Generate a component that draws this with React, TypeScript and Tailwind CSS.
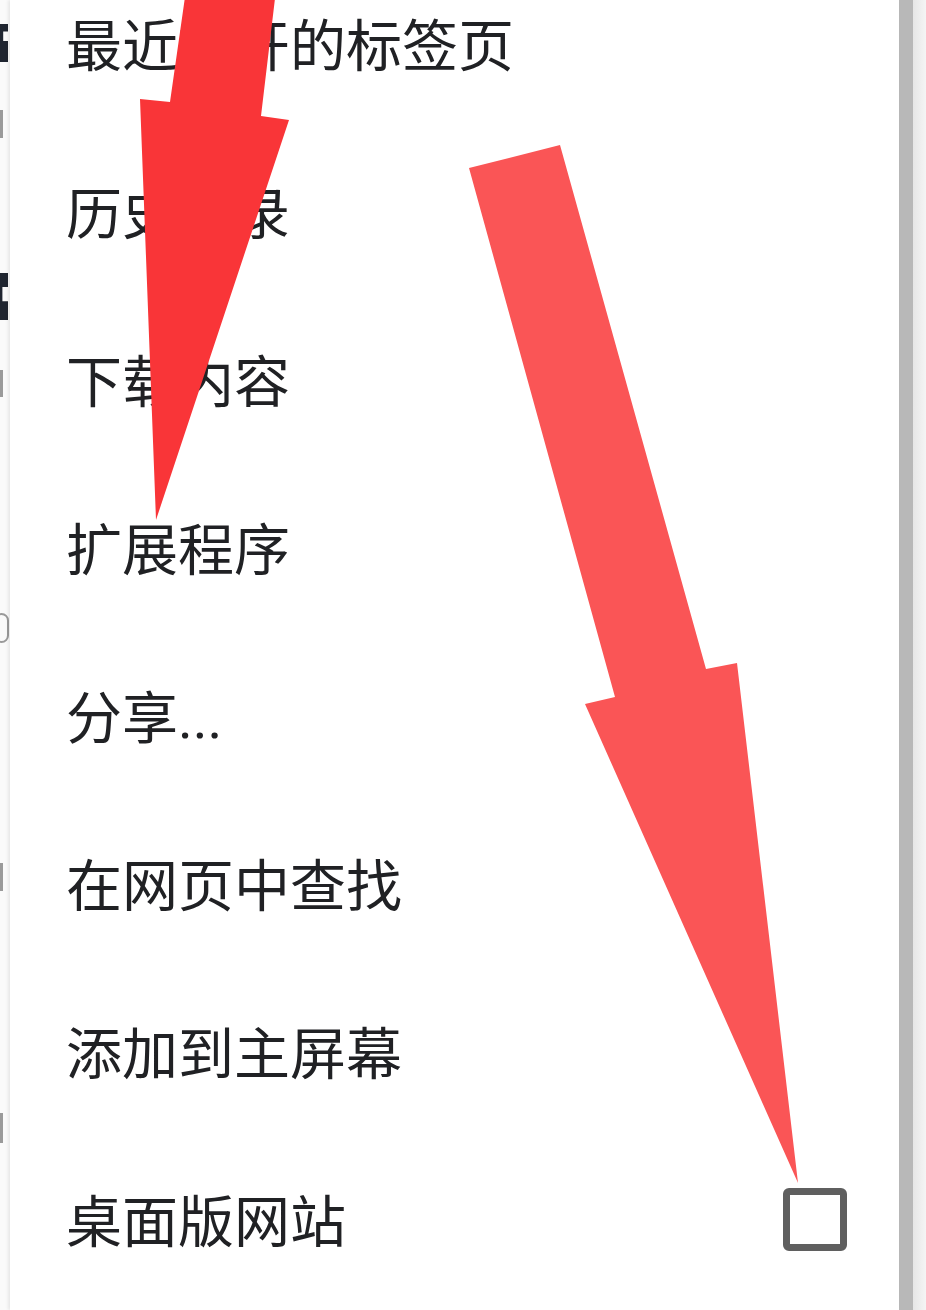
const items = [
  "最近打开的标签页",
  "历史记录",
  "下载内容",
  "扩展程序",
  "分享...",
  "在网页中查找",
  "添加到主屏幕",
];

// the page behind the menu, only a sliver shows on the left
function BackgroundSliver() {
  return (
    <div className="flex w-[10px] shrink-0 flex-col overflow-hidden bg-[#fafafa]">
      <div className="mt-[24px] h-[38px] w-[8px] bg-[#1f2530] [clip-path:polygon(0_0,100%_0,100%_20%,40%_20%,40%_45%,100%_45%,100%_100%,0_100%)]" />
      <div className="mt-[48px] h-[28px] w-[3px] bg-[#9a9a9a]" />
      <div className="mt-[135px] h-[47px] w-[8px] bg-[#1f2530] [clip-path:polygon(0_0,100%_0,100%_30%,30%_30%,30%_60%,100%_60%,100%_100%,0_100%)]" />
      <div className="mt-[50px] h-[27px] w-[3px] bg-[#9a9a9a]" />
      <div className="ml-[-6px] mt-[216px] h-[30px] w-[15px] rounded-full border-[2px] border-[#9a9a9a]" />
      <div className="mt-[220px] h-[28px] w-[3px] bg-[#9a9a9a]" />
      <div className="mt-[222px] h-[30px] w-[3px] bg-[#9a9a9a]" />
    </div>
  );
}

function Arrows() {
  return (
    <svg
      className="pointer-events-none absolute inset-0 h-full w-full"
      viewBox="0 0 926 1310"
    >
      <polygon
        points="186,-10 276,-10 261,116 289,120 156,520 140,99 170,102"
        fill="#f93538"
      />
      <polygon
        points="469,168 560,145 706,669 737,663 798,1183 585,704 615,697"
        fill="#fa5556"
      />
    </svg>
  );
}

export default function App() {
  return (
    <div
      className="relative flex h-[1310px] w-[926px] overflow-hidden bg-white"
      style={{ fontFamily: '"Roboto", "Noto Sans CJK SC", sans-serif' }}
    >
      <BackgroundSliver />

      {/* Menu panel */}
      <div className="relative flex-1 bg-white shadow-[-2px_0_3px_rgba(0,0,0,0.08)]">
        <div className="-mt-[37px] flex flex-col pl-[56px] pr-[52px]">
          {items.map((label) => (
            <div
              key={label}
              className="flex h-[168px] items-center text-[56px] leading-none text-[#202124]"
            >
              {label}
            </div>
          ))}
          <div className="flex h-[168px] items-center justify-between text-[56px] leading-none text-[#202124]">
            <span>桌面版网站</span>
            <div className="mb-[8px] h-[63px] w-[64px] rounded-[6px] border-[7px] border-[#5f5f5f]" />
          </div>
        </div>
      </div>

      {/* scrollbar and edge */}
      <div className="w-[14px] shrink-0 bg-[#b8b8b8]" />
      <div className="w-[13px] shrink-0 bg-gradient-to-r from-[#e6e6e6] to-[#f5f5f5]" />

      <Arrows />
    </div>
  );
}
